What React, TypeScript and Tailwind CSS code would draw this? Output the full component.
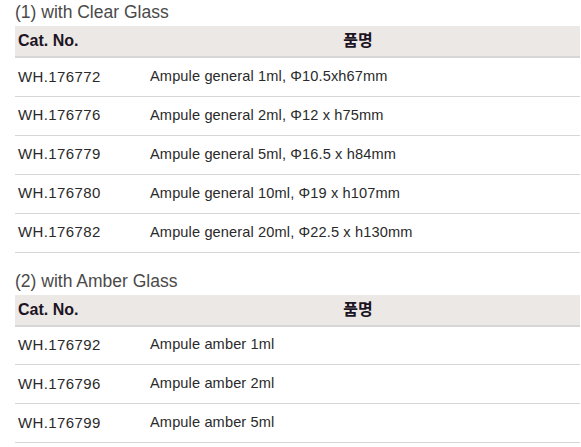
const sections = [
    {
        title: "(1) with Clear Glass",
        rows: [
            ["WH.176772", "Ampule general 1ml, Φ10.5xh67mm"],
            ["WH.176776", "Ampule general 2ml, Φ12 x h75mm"],
            ["WH.176779", "Ampule general 5ml, Φ16.5 x h84mm"],
            ["WH.176780", "Ampule general 10ml, Φ19 x h107mm"],
            ["WH.176782", "Ampule general 20ml, Φ22.5 x h130mm"],
        ],
    },
    {
        title: "(2) with Amber Glass",
        rows: [
            ["WH.176792", "Ampule amber 1ml"],
            ["WH.176796", "Ampule amber 2ml"],
            ["WH.176799", "Ampule amber 5ml"],
        ],
    },
]

const ProductTable = ({ title, rows }: { title: string; rows: string[][] }) => {
    return (
        <div className="flex flex-col">
            <h3 className="h-[26px] pt-[2px] text-[17.5px] leading-[21px] text-[#4a4a4a]">{title}</h3>
            <table className="w-full border-collapse text-[15px]">
                <thead>
                    <tr className="h-[31px] bg-[#ebe8e5] border-b-2 border-[#d6d6d6]">
                        <th className="w-[135px] pl-[3px] text-left text-[16px] font-bold text-[#1c1424]">Cat. No.</th>
                        <th className="pr-[14px] text-center text-[16px] font-bold text-[#1c1424]">품명</th>
                    </tr>
                </thead>
                <tbody>
                    {rows.map(([cat, name]) => (
                        <tr key={cat} className="h-[39px] border-b border-[#d6d6d6] text-[#2a2a2a]">
                            <td className="pl-[3px] tracking-[0.4px]">{cat}</td>
                            <td className="text-[14.6px] tracking-[0.12px]">{name}</td>
                        </tr>
                    ))}
                </tbody>
            </table>
        </div>
    )
}

const App = () => {
    return (
        <div
            className="w-[581px] h-[447px] overflow-hidden bg-white pl-[15px] pr-px"
            style={{ fontFamily: '"Liberation Sans", "Noto Sans CJK KR", sans-serif' }}
        >
            <div className="flex flex-col gap-4">
                {sections.map((s) => (
                    <ProductTable key={s.title} title={s.title} rows={s.rows} />
                ))}
            </div>
        </div>
    )
}

export default App
